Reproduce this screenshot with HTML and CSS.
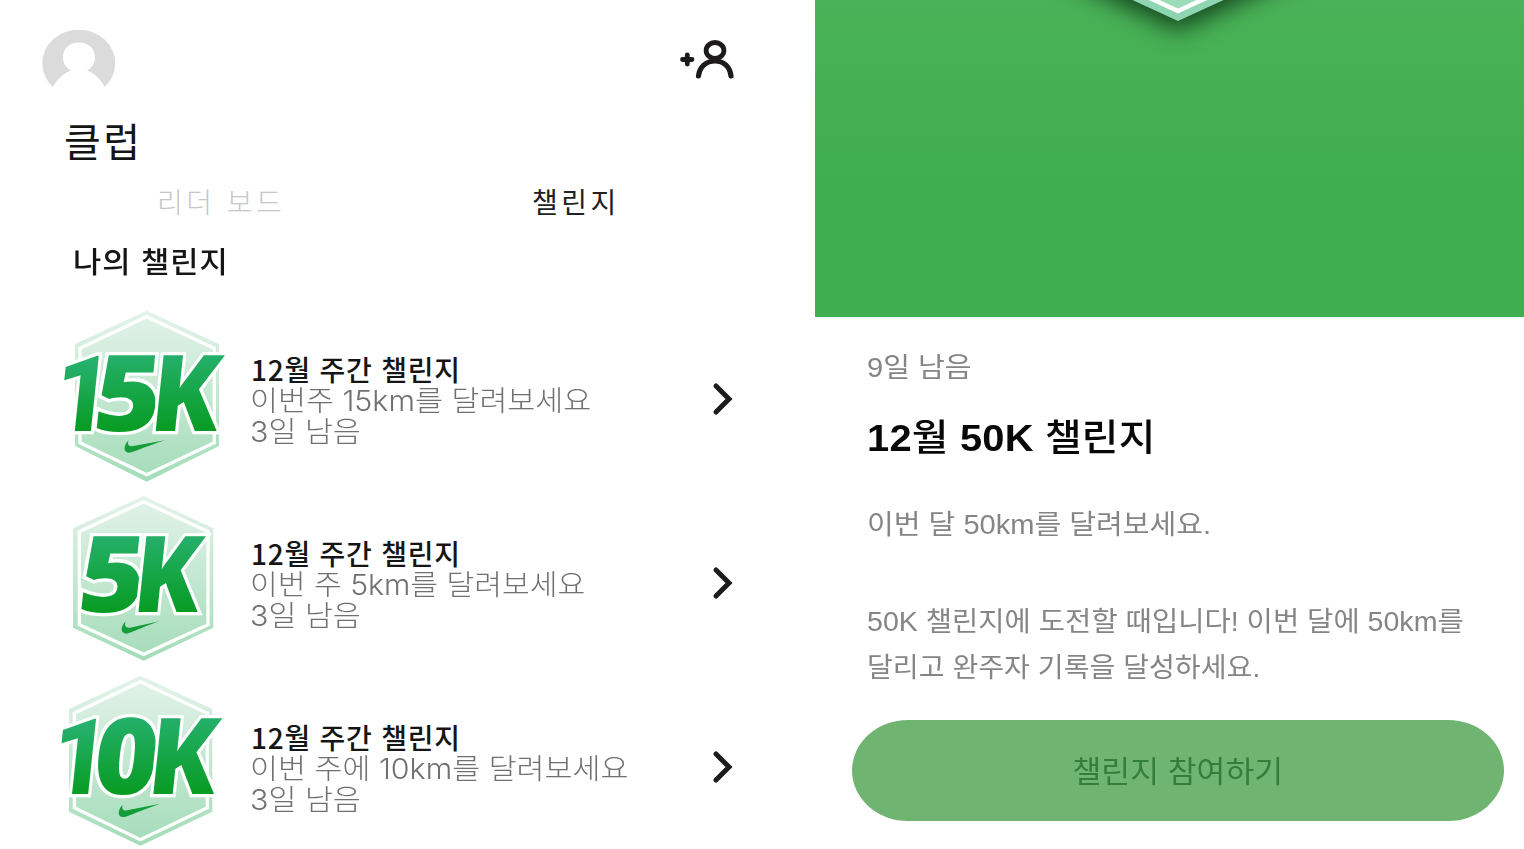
FILE: index.html
```html
<!DOCTYPE html>
<html lang="ko">
<head>
<meta charset="utf-8">
<title>클럽</title>
<link rel="stylesheet" href="styles.css">
</head>
<body>
<main class="page">
  <section class="club">
    <header class="topbar">
      <svg class="avatar" viewBox="0 0 74 58"><path d="M11 57A36.500 33.500 0 1 1 62.500 57C59 49 52 43 45 40.500C50 38 53 33 53 27C53 18 46 12.500 37 12.500C28 12.500 21 18 21 27C21 33 24 38 29 40.500C22 43 15 49 11 57Z" fill="#dbdbdb"/></svg>
      <svg class="add-friend" viewBox="0 0 60 42" fill="none" stroke="#1c1a1b" stroke-linecap="round"><path d="M4.500 19.500H14M9.300 15V24" stroke-width="4.800"/><ellipse cx="37" cy="10.500" rx="8.900" ry="8" stroke-width="4.800"/><path d="M20.500 36C21.500 27 28 21 37 21C46 21 52 27 53 36" stroke-width="5.200"/></svg>
    </header>
    <h1 class="title">클럽</h1>
    <nav class="tabs"><span class="tab">리더 보드</span><span class="tab tab-active">챌린지</span></nav>
    <h2 class="subtitle">나의 챌린지</h2>
    <ul class="list">
      <li class="row">
        <svg class="badge" viewBox="0 0 570 552">
          <defs>
            <linearGradient id="hex" x1="0" y1="0" x2="0" y2="1"><stop offset="0" stop-color="#e3f3e9"/><stop offset="1" stop-color="#a4dcb9"/></linearGradient>
            <linearGradient id="num" x1="0" y1="0" x2="0" y2="1"><stop offset=".25" stop-color="#25b06c"/><stop offset=".78" stop-color="#089c24"/></linearGradient>
          </defs>
          <path class="hex" d="M290 32L507 132V438L290 545L75 438V132Z"/>
          <path class="hex-line" d="M290 50L493 145V428L290 524L90 428V145Z"/>
          <text class="num one" transform="translate(3 392) skewX(-6)" textLength="170" lengthAdjust="spacingAndGlyphs">1</text>
          <text class="num" transform="translate(124 392) skewX(-6)" textLength="200" lengthAdjust="spacingAndGlyphs">5</text>
          <text class="num" transform="translate(294 392) skewX(-6)" textLength="206" lengthAdjust="spacingAndGlyphs">K</text>
          <path class="swoosh" d="M236 421C220 436 219 457 236 458C250 458 264 448 345 421L250 438C237 441 230 434 236 421Z"/>
        </svg>
        <div class="info"><span class="name">12월 주간 챌린지</span><span class="desc">이번주 15km를 달려보세요</span><span class="desc">3일 남음</span></div>
        <svg class="chevron" viewBox="0 0 24 36"><path d="M5 5L18 18L5 31"/></svg>
      </li>
      <li class="row">
        <svg class="badge" viewBox="0 -3 570 552">
          <path class="hex" d="M281 33L490 130V428L281 527L69 428V130Z"/>
          <path class="hex-line" d="M281 50L474 140V419L281 508L88 419V140Z"/>
          <text class="num" transform="translate(78 381) skewX(-6)" textLength="198" lengthAdjust="spacingAndGlyphs">5</text>
          <text class="num" transform="translate(243 381) skewX(-6)" textLength="200" lengthAdjust="spacingAndGlyphs">K</text>
          <path class="swoosh" d="M227 409C211 424 211 444 227 446C241 446 255 435 328 409L240 428C228 430 222 422 227 409Z"/>
        </svg>
        <div class="info"><span class="name">12월 주간 챌린지</span><span class="desc desc-short">이번 주 5km를 달려보세요</span><span class="desc">3일 남음</span></div>
        <svg class="chevron" viewBox="0 0 24 36"><path d="M5 5L18 18L5 31"/></svg>
      </li>
      <li class="row">
        <svg class="badge" viewBox="0 9 570 552">
          <path class="hex" d="M271 32L487 132V440L271 542L57 440V132Z"/>
          <path class="hex-line" d="M271 50L472 145V428L271 524L73 428V145Z"/>
          <text class="num one" transform="translate(-5 387) skewX(-6)" textLength="170" lengthAdjust="spacingAndGlyphs">1</text>
          <text class="num" transform="translate(122 387) skewX(-6)" textLength="194" lengthAdjust="spacingAndGlyphs">0</text>
          <text class="num" transform="translate(287 387) skewX(-6)" textLength="205" lengthAdjust="spacingAndGlyphs">K</text>
          <path class="swoosh" d="M218 419C204 433 201 453 217 456C230 457 248 445 330 416L232 436C220 438 214 431 218 419Z"/>
        </svg>
        <div class="info"><span class="name">12월 주간 챌린지</span><span class="desc">이번 주에 10km를 달려보세요</span><span class="desc">3일 남음</span></div>
        <svg class="chevron" viewBox="0 0 24 36"><path d="M5 5L18 18L5 31"/></svg>
      </li>
    </ul>
  </section>
  <section class="detail">
    <svg class="hero" viewBox="0 0 709 317">
      <path class="hero-hex" d="M363 21L63 -117V-300H663V-117Z" fill="#8dd6b1"/>
      <path d="M363 11L63 -127V-300H663V-127Z" fill="#9cdcb9" stroke="#fff" stroke-width="4.500"/>
    </svg>
    <div class="content">
      <p class="left-days">9일 남음</p>
      <h2 class="heading"><b>12</b>월 <b>50K</b> 챌린지</h2>
      <p class="lead">이번 달 50km를 달려보세요.</p>
      <p class="body"><span class="line">50K 챌린지에 도전할 때입니다! 이번 달에 50km를</span><span class="line line-last">달리고 완주자 기록을 달성하세요.</span></p>
    </div>
    <button class="join"><span class="join-label">챌린지 참여하기</span></button>
  </section>
</main>
</body>
</html>
```
FILE: styles.css
```css
* { box-sizing: border-box; margin: 0; padding: 0; }
body { width: 1524px; height: 849px; overflow: hidden; background: #fff; font-family: "Noto Sans CJK KR", sans-serif; color: #151515; }
.page { display: grid; grid-template-columns: 815px 709px; height: 849px; overflow: hidden; }
.club { display: flex; flex-direction: column; white-space: nowrap; }
.topbar { display: flex; justify-content: space-between; align-items: flex-start; height: 115px; padding: 30px 77px 0 42px; }
.avatar { width: 74px; height: 58px; }
.add-friend { width: 60px; height: 42px; margin-top: 10px; }
.title { font-size: 40px; line-height: 50px; font-weight: 400; padding-left: 64px; letter-spacing: 2.5px; }
.tabs { display: flex; height: 72px; line-height: 72px; font-size: 28px; padding-left: 157px; letter-spacing: 3.5px; }
.tab { flex: none; width: 375px; color: #c6c6c6; font-weight: 300; }
.tab-active { color: #222; font-weight: 400; }
.subtitle { font-size: 29px; line-height: 46px; font-weight: 500; padding-left: 73px; letter-spacing: .9px; width: fit-content; transform: scaleX(1.06); transform-origin: 73px 0; }
.list { list-style: none; margin-top: 17px; }
.row { display: flex; height: 184px; padding-left: 50px; }
.badge { width: 190px; height: 184px; flex: none; overflow: visible; }
.hex { fill: url(#hex); }
.hex-line { fill: none; stroke: #fff; stroke-width: 10px; }
.num { font-family: "Open Sans", sans-serif; font-weight: 800; font-size: 318px; fill: url(#num); stroke: #fff; stroke-width: 20px; paint-order: stroke; }
.one { font-family: Roboto, sans-serif; font-weight: 900; }
.swoosh { fill: #159d3a; }
.info { display: flex; flex-direction: column; align-items: flex-start; width: 460px; margin: 54px 0 0 11px; font-size: 28px; line-height: 31px; }
.name { font-weight: 500; letter-spacing: .75px; }
.desc { position: relative; top: 1px; left: -1px; font-family: Inter, "Noto Sans CJK KR", sans-serif; font-weight: 300; color: #707070; transform: scaleX(1.085); transform-origin: 0 0; }
.desc-short { transform: scaleX(1.077); }
.chevron { width: 24px; height: 36px; margin-top: 81px; fill: none; stroke: #1c1c1c; stroke-width: 5px; stroke-linecap: round; }
.detail { display: flex; flex-direction: column; font-family: "Liberation Sans", "Noto Sans CJK KR", sans-serif; white-space: nowrap; }
.hero { width: 709px; height: 317px; flex: none; background: linear-gradient(#4ab258, #3eae4e 58%); }
.hero-hex { filter: drop-shadow(0 9px 12px rgba(0, 30, 8, .75)); }
.content { padding-left: 52px; height: 403px; color: #858585; font-size: 27px; }
.left-days, .heading, .lead, .line { width: fit-content; transform: scaleX(1.077); transform-origin: 0 0; }
.left-days { line-height: 40px; margin-top: 31px; }
.heading { font-size: 37px; line-height: 50px; margin-top: 26px; font-weight: 500; color: #080808; letter-spacing: .2px; }
.lead { line-height: 40px; margin-top: 41px; }
.body { line-height: 46px; margin-top: 54px; }
.line { display: block; transform: scaleX(1.058); }
.line-last { transform: scaleX(1.041); }
.join { width: 652px; height: 101px; margin-left: 37px; padding-bottom: 4px; border: 0; border-radius: 56px / 50.5px; background: #70b472; color: #337d3d; font: 400 30px "Noto Sans CJK KR", sans-serif; }
.join-label { display: inline-block; transform: scaleX(1.045); }
```
